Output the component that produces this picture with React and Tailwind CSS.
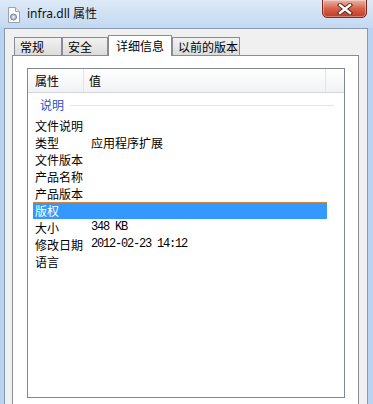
import React from "react";

const cjk = { fontFamily: '"Noto Sans CJK SC", "Noto Sans", sans-serif' };

// Rows of the details list
const rows = [
  { name: "文件说明", value: "" },
  { name: "类型", value: "应用程序扩展", cjkValue: true },
  { name: "文件版本", value: "" },
  { name: "产品名称", value: "" },
  { name: "产品版本", value: "" },
  { name: "版权", value: "", selected: true },
  { name: "大小", value: "348 KB" },
  { name: "修改日期", value: "2012-02-23 14:12" },
  { name: "语言", value: "" },
];

function FileIcon() {
  return (
    <svg width="14" height="16" viewBox="0 0 14 16">
      <path d="M1.5 0.5 H8.5 L12.5 4.5 V15.5 H1.5 Z" fill="#fbfcfd" stroke="#9aa3ad" />
      <path d="M8.5 0.5 V4.5 H12.5" fill="#e4e8ec" stroke="#9aa3ad" />
      <circle cx="6.5" cy="10" r="3" fill="#b9c6d3" stroke="#6f8296" />
      <circle cx="6.5" cy="10" r="1" fill="#fbfcfd" />
    </svg>
  );
}

function CloseButton() {
  return (
    <div className="w-[45px] h-[19px] -mt-px rounded-b-[5px] border border-[#7a2a1e] bg-gradient-to-b from-[#eab4a6] via-[#d6624c] to-[#c23a22] flex items-center justify-center shadow-[inset_0_0_0_1px_rgba(255,255,255,0.35)]">
      <svg width="16" height="12" viewBox="0 0 16 12">
        <path d="M3 2 L13 10 M13 2 L3 10" stroke="#5a1d14" strokeWidth="4.2" strokeLinecap="square" />
        <path d="M3 2 L13 10 M13 2 L3 10" stroke="#ffffff" strokeWidth="2.4" strokeLinecap="square" />
      </svg>
    </div>
  );
}

function Tab({ label, width, selected }) {
  if (selected) {
    return (
      <div
        className={`${width} h-[21px] -mb-px relative z-10 bg-white border-x border-t border-[#898c95] flex items-start justify-center pt-[2px] text-[12px] leading-[16px] text-black`}
      >
        {label}
      </div>
    );
  }
  return (
    <div
      className={`${width} h-[18px] bg-gradient-to-b from-[#f2f2f2] to-[#dcdcdc] border-x border-t border-[#898c95] flex items-start pl-[5px] pt-[1px] text-[12px] leading-[16px] text-black`}
    >
      {label}
    </div>
  );
}

export default function App() {
  return (
    <div className="w-[373px] h-[404px] overflow-hidden bg-[#b9d3f0] flex flex-col" style={cjk}>
      {/* title bar */}
      <div className="h-[28px] flex items-start bg-gradient-to-b from-[#dde9f7] to-[#c3d9f1] pl-[7px] pr-[6px] shrink-0">
        <div className="mt-[7px]">
          <FileIcon />
        </div>
        <div
          className="ml-[6px] mt-[5px] text-[12px] leading-[18px] text-[#111]"
          style={{ fontFamily: '"Noto Sans", "Noto Sans CJK SC", sans-serif' }}
        >
          infra.dll 属性
        </div>
        <div className="ml-auto">
          <CloseButton />
        </div>
      </div>

      {/* client area */}
      <div className="flex-1 ml-[4px] mr-[5px] border-x border-t border-[#8699ad] bg-[#f0f0f0] pt-[6px] pl-[7px] pr-[8px] flex flex-col">
        <div className="flex items-end pl-[2px] h-[20px]">
          <Tab label="常规" width="w-[48px]" />
          <Tab label="安全" width="w-[46px]" />
          <Tab label="详细信息" width="w-[64px]" selected />
          <Tab label="以前的版本" width="w-[68px]" />
        </div>

        {/* tab panel */}
        <div className="flex-1 bg-white border-x border-t border-[#898c95] pt-[12px] pl-[14px] pr-[13px]">
          <div className="h-[330px] border border-[#828790] bg-white flex flex-col">
            {/* column header */}
            <div className="h-[24px] flex border-b border-[#d5d5d5] bg-gradient-to-b from-white to-[#f1f2f4] text-[12px] text-black">
              <div className="w-[56px] pl-[7px] flex items-center border-r border-[#e3e5e8]">属性</div>
              <div className="w-[242px] pl-[5px] flex items-center border-r border-[#e3e5e8]">值</div>
            </div>

            {/* group header */}
            <div className="h-[24px] flex items-center pl-[12px] pr-[10px]">
              <span className="text-[12px] text-[#2a4fc4]">说明</span>
              <div className="flex-1 ml-[6px] h-px bg-[#e2e5ea]" />
            </div>

            <div className="flex flex-col">
              {rows.map((r) => (
                <div
                  key={r.name}
                  className={`ml-[5px] w-[294px] h-[17px] flex items-center pl-[2px] text-[12px] leading-[17px] ${
                    r.selected ? "bg-[#3399ff] text-white shadow-[inset_0_1px_0_#d8823c]" : "text-black"
                  }`}
                >
                  <div className="w-[56px] shrink-0">{r.name}</div>
                  {r.cjkValue ? (
                    <div>{r.value}</div>
                  ) : (
                    <div
                      className="text-[12px] tracking-[-1.2px]"
                      style={{ fontFamily: '"Liberation Mono", monospace' }}
                    >
                      {r.value}
                    </div>
                  )}
                </div>
              ))}
            </div>
          </div>
        </div>
      </div>
    </div>
  );
}
